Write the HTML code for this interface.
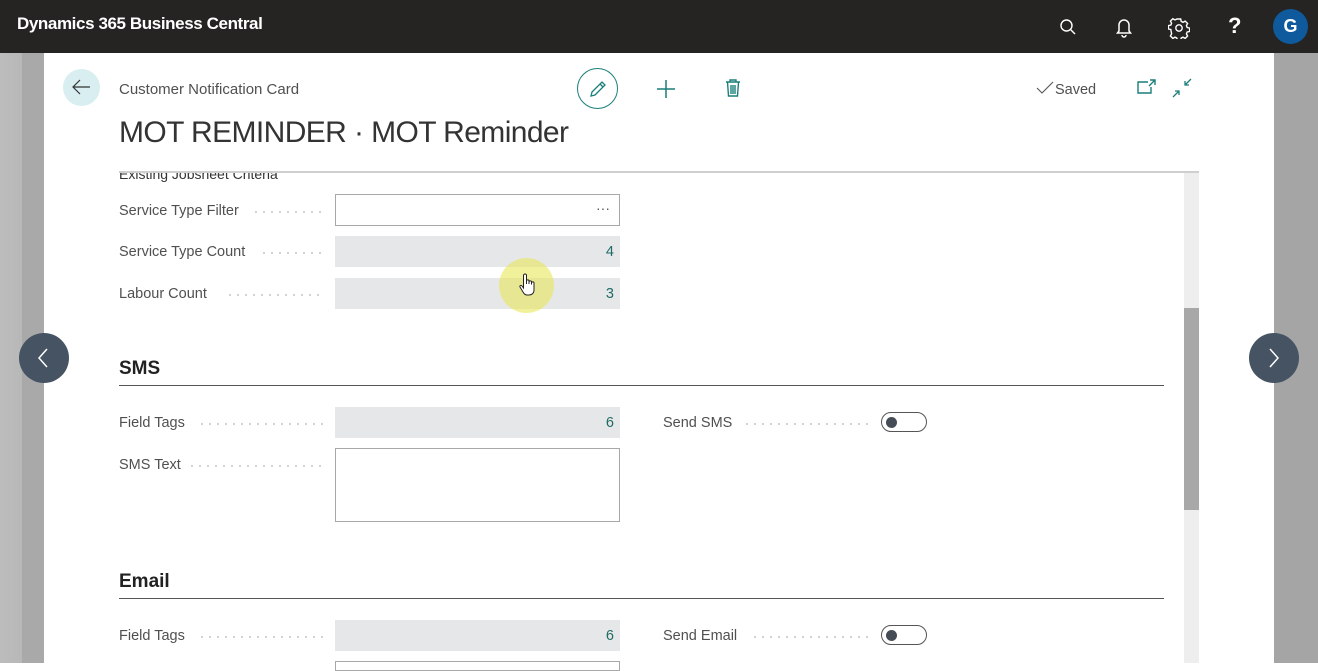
<!DOCTYPE html>
<html><head><meta charset="utf-8">
<style>
*{margin:0;padding:0;box-sizing:border-box}
body{width:1318px;height:663px;overflow:hidden;position:relative;background:#fff;font-family:"Liberation Sans",sans-serif;color:#505050}
.a{position:absolute}
.top{left:0;top:0;width:1318px;height:53px;background:#252423}
.brand{left:17px;top:14px;color:#fff;font-size:17px;font-weight:bold;letter-spacing:-0.4px}
.gl{left:0;top:53px;width:44px;height:610px;background:linear-gradient(90deg,#bcbcbc 0,#b8b8b8 22px,#a9a9a9 22px,#a9a9a9 44px)}
.gr{left:1274px;top:53px;width:44px;height:610px;background:#a5a5a5}
.lbl{font-size:14.5px;color:#505050;white-space:nowrap}
.dots{height:2px;background:radial-gradient(circle,#c8c8c8 0.9px,transparent 1.1px) 0 0/8px 2px repeat-x}
.ro{background:#e6e7e8;height:31px;width:285px;text-align:right;font-size:14.5px;color:#1f6b66;padding:8px 6px 0 0}
.inp{border:1px solid #a8a8a8;background:#fff;width:285px}
.sec{font-size:19px;font-weight:bold;color:#222}
.hr{height:1px;background:#555;width:1045px;left:119px}
.tog{width:46px;height:20px;border:1.5px solid #555;border-radius:10px}
.tog i{position:absolute;left:4px;top:3.5px;width:11px;height:11px;border-radius:50%;background:#454c55}
.nav{width:50px;height:50px;border-radius:50%;background:#465363}
</style></head><body>
<div class="a top"></div>
<div class="a brand">Dynamics 365 Business Central</div>
<svg class="a" style="left:1058px;top:17px" width="20" height="20" viewBox="0 0 20 20" fill="none" stroke="#fff" stroke-width="1.4"><circle cx="8.5" cy="8.5" r="5.5"/><path d="M12.5 12.5L17 17"/></svg>
<svg class="a" style="left:1114px;top:16px" width="20" height="22" viewBox="0 0 20 22" fill="none" stroke="#fff" stroke-width="1.5"><path d="M5 15V9a5 5 0 0 1 10 0v6l1.5 2h-13z"/><path d="M8 19a2 2 0 0 0 4 0"/></svg>
<svg class="a" style="left:1168px;top:17px" width="22" height="22" viewBox="0 0 22 22" fill="none" stroke="#fff" stroke-width="1.4"><circle cx="11" cy="11" r="3.2"/><path d="M9.3 2h3.4l.5 2.4 1.8.9 2.2-1.2 2.4 2.4-1.2 2.2.8 1.8 2.4.6v3.4l-2.4.5-.8 1.8 1.2 2.2-2.4 2.4-2.2-1.2-1.8.8-.5 2.4H9.3l-.5-2.4-1.8-.8-2.2 1.2-2.4-2.4 1.2-2.2L2.8 12.5.4 12V8.6l2.4-.5.8-1.8L2.4 4.1 4.8 1.7 7 2.9l1.8-.8z"/></svg>
<div class="a" style="left:1228px;top:13px;color:#fff;font-size:22px;font-weight:bold">?</div>
<div class="a" style="left:1273px;top:9px;width:35px;height:35px;border-radius:50%;background:#0e5a9c;color:#fff;font-weight:bold;font-size:18px;text-align:center;line-height:35px">G</div>
<div class="a gl"></div><div class="a gr"></div>
<div class="a" style="left:63px;top:69px;width:37px;height:37px;border-radius:50%;background:#d8eef0"></div>
<svg class="a" style="left:71px;top:78px" width="20" height="18" viewBox="0 0 20 18" fill="none" stroke="#333" stroke-width="1.2"><path d="M19 9H2M9 2L2 9l7 7"/></svg>
<div class="a lbl" style="left:119px;top:81px;font-size:15px">Customer Notification Card</div>
<div class="a" style="left:119px;top:116px;font-size:30px;font-weight:300;color:#333;letter-spacing:-0.6px">MOT REMINDER · MOT Reminder</div>
<div class="a" style="left:577px;top:68px;width:41px;height:41px;border-radius:50%;border:1.5px solid #1a7f7a"></div>
<svg class="a" style="left:587px;top:78px" width="22" height="22" viewBox="0 0 22 22" fill="none" stroke="#1a7f7a" stroke-width="1.3"><path d="M4 18l1-4L15 4l3 3L8 17z M13 6l3 3"/></svg>
<svg class="a" style="left:655px;top:78px" width="22" height="22" viewBox="0 0 22 22" stroke="#1a7f7a" stroke-width="1.5"><path d="M11 2v18M2 11h18"/></svg>
<svg class="a" style="left:724px;top:78px" width="18" height="20" viewBox="0 0 18 20" fill="none" stroke="#1a7f7a" stroke-width="1.4"><path d="M2 4h14M6 4V2h6v2M3.5 4l1 14h9l1-14M7 7v9M9 7v9M11 7v9"/></svg>
<svg class="a" style="left:1036px;top:81px" width="18" height="14" viewBox="0 0 18 14" fill="none" stroke="#555" stroke-width="1.1"><path d="M1 7l5 5L17 1"/></svg>
<div class="a lbl" style="left:1055px;top:82px;font-size:14.5px">Saved</div>
<svg class="a" style="left:1137px;top:79px" width="20" height="16" viewBox="0 0 20 16" fill="none" stroke="#1a7f7a" stroke-width="1.4"><path d="M11 3H1v11h13V8M13 1h5v5M18 1l-6 6"/></svg>
<svg class="a" style="left:1172px;top:78px" width="20" height="20" viewBox="0 0 20 20" fill="none" stroke="#1a7f7a" stroke-width="1.3"><path d="M19 1l-6 6M13 3v4h4M1 19l6-6M7 17v-4H3"/></svg>
<div class="a" style="left:119px;top:171px;width:1080px;height:2px;background:#cfcfcf"></div>
<div class="a" style="left:1184px;top:173px;width:15px;height:490px;background:#eeeeee"></div>
<div class="a" style="left:1184px;top:308px;width:15px;height:202px;background:#a8a8a8"></div>
<div class="a" style="left:119px;top:173px;width:300px;height:10px;overflow:hidden"><div style="position:absolute;top:-7px;font-size:14px;color:#333">Existing Jobsheet Criteria</div></div>
<div class="a lbl" style="left:119px;top:203px">Service Type Filter</div><div class="a dots" style="left:252px;top:211px;width:72px"></div>
<div class="a inp" style="left:335px;top:194px;height:32px"></div><div class="a" style="left:596px;top:200px;color:#555;font-size:14px">···</div>
<div class="a lbl" style="left:119px;top:244px">Service Type Count</div><div class="a dots" style="left:260px;top:252px;width:64px"></div>
<div class="a ro" style="left:335px;top:236px">4</div>
<div class="a lbl" style="left:119px;top:286px">Labour Count</div><div class="a dots" style="left:226px;top:294px;width:98px"></div>
<div class="a ro" style="left:335px;top:278px">3</div>
<div class="a" style="left:499px;top:258px;width:55px;height:55px;border-radius:50%;background:rgba(232,232,90,.6)"></div>
<svg class="a" style="left:518px;top:272px" width="22" height="26" viewBox="0 0 22 26" fill="#fff" stroke="#222" stroke-width="1"><path d="M7 2c1 0 1.5.7 1.5 1.5V12V9c0-1.5 2.5-1.5 2.5 0v3-2c0-1.5 2.5-1.5 2.5 0v2.5-1.5c0-1.5 2.5-1.5 2.5 0V18c0 3-2 5-5 5H9c-2 0-3-1-4-3l-3-5c-.7-1.2 1-2.3 2-1l1.5 2V3.5C5.5 2.7 6 2 7 2z"/></svg>
<div class="a sec" style="left:119px;top:358px">SMS</div>
<div class="a hr" style="top:385px"></div>
<div class="a lbl" style="left:119px;top:415px">Field Tags</div><div class="a dots" style="left:198px;top:423px;width:126px"></div>
<div class="a ro" style="left:335px;top:407px">6</div>
<div class="a lbl" style="left:663px;top:415px">Send SMS</div><div class="a dots" style="left:743px;top:423px;width:126px"></div>
<div class="a tog" style="left:881px;top:412px"><i></i></div>
<div class="a lbl" style="left:119px;top:457px">SMS Text</div><div class="a dots" style="left:188px;top:465px;width:136px"></div>
<div class="a inp" style="left:335px;top:448px;height:74px"></div>
<div class="a sec" style="left:119px;top:571px">Email</div>
<div class="a hr" style="top:598px"></div>
<div class="a lbl" style="left:119px;top:628px">Field Tags</div><div class="a dots" style="left:198px;top:636px;width:126px"></div>
<div class="a ro" style="left:335px;top:620px">6</div>
<div class="a lbl" style="left:663px;top:628px">Send Email</div><div class="a dots" style="left:751px;top:636px;width:118px"></div>
<div class="a tog" style="left:881px;top:625px"><i></i></div>
<div class="a inp" style="left:335px;top:661px;height:10px"></div>
<div class="a nav" style="left:19px;top:333px"></div>
<svg class="a" style="left:36px;top:347px" width="14" height="22" viewBox="0 0 14 22" fill="none" stroke="#fff" stroke-width="1.5"><path d="M11 2L3 11l8 9"/></svg>
<div class="a nav" style="left:1249px;top:333px"></div>
<svg class="a" style="left:1267px;top:347px" width="14" height="22" viewBox="0 0 14 22" fill="none" stroke="#fff" stroke-width="1.5"><path d="M3 2l8 9-8 9"/></svg>
</body></html>
